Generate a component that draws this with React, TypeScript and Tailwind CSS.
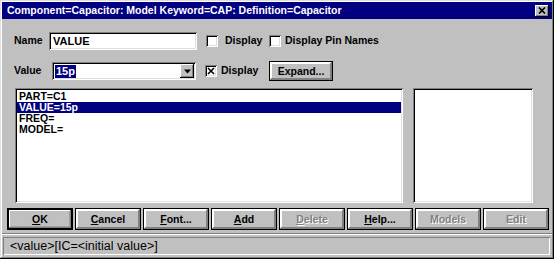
import React from "react";

const FONT = { fontFamily: '"Liberation Sans", Arial, sans-serif' };

function Btn({
  children,
  def,
  disabled,
  w = "w-[66px]",
  h = "h-[22px]",
}: {
  children: React.ReactNode;
  def?: boolean;
  disabled?: boolean;
  w?: string;
  h?: string;
}) {
  return (
    <div
      className={`${w} ${h} shrink-0 flex items-center justify-center bg-[#c0c0c0] text-[10.5px] font-bold leading-none ${
        def
          ? "border-2 border-black shadow-[inset_-1px_-1px_#808080,inset_1px_1px_#fff,inset_-2px_-2px_#a0a0a0]"
          : "border border-black shadow-[inset_-1px_-1px_#808080,inset_1px_1px_#fff,inset_-2px_-2px_#808080,inset_2px_2px_#fff]"
      } ${disabled ? "text-[#808080] [text-shadow:1px_1px_0_#fff]" : "text-black"}`}
    >
      {children}
    </div>
  );
}

function Check({ checked }: { checked?: boolean }) {
  return (
    <div className="w-[12px] h-[12px] shrink-0 bg-white shadow-[inset_1px_1px_#808080,inset_-1px_-1px_#fff,inset_2px_2px_#000,inset_-2px_-2px_#dfdfdf] flex items-center justify-center">
      {checked && (
        <svg width="8" height="8" viewBox="0 0 8 8">
          <path d="M1 1 L7 7 M7 1 L1 7" stroke="#000" strokeWidth="1.6" />
        </svg>
      )}
    </div>
  );
}

const sunken =
  "bg-white shadow-[inset_1px_1px_#808080,inset_-1px_-1px_#fff,inset_2px_2px_#000,inset_-2px_-2px_#dfdfdf]";

export default function App() {
  return (
    <div
      style={FONT}
      className="w-[554px] h-[259px] bg-[#c0c0c0] p-[2px] flex flex-col shadow-[inset_-1px_-1px_#000,inset_1px_1px_#dfdfdf,inset_-2px_-2px_#808080,inset_2px_2px_#fff] overflow-hidden"
    >
      {/* Title bar */}
      <div className="h-[17px] shrink-0 bg-[#000080] flex items-center justify-between pl-[5px] pr-[3px]">
        <span className="text-white font-bold text-[10.5px] leading-none">
          Component=Capacitor: Model Keyword=CAP: Definition=Capacitor
        </span>
        <div className="w-[14px] h-[12px] bg-[#c0c0c0] shadow-[inset_-1px_-1px_#000,inset_1px_1px_#fff,inset_-2px_-2px_#808080] flex items-center justify-center">
          <svg width="8" height="7" viewBox="0 0 8 7">
            <path d="M1 0.5 L7 6.5 M7 0.5 L1 6.5" stroke="#000" strokeWidth="1.7" />
          </svg>
        </div>
      </div>

      {/* Row 1 */}
      <div className="mt-[13px] h-[18px] shrink-0 flex items-center text-[10.5px] font-bold text-black">
        <span className="ml-[12px] w-[35px]">Name</span>
        <div className={`w-[148px] h-[18px] ${sunken} flex items-center pl-[4px] font-normal text-[12px]`}>
          <span className="font-bold text-[11px]">VALUE</span>
        </div>
        <div className="ml-[9px]">
          <Check />
        </div>
        <span className="ml-[7px] w-[44px]">Display</span>
        <Check />
        <span className="ml-[4px]">Display Pin Names</span>
      </div>

      {/* Row 2 */}
      <div className="mt-[11px] h-[20px] shrink-0 flex items-center text-[10.5px] font-bold text-black">
        <span className="ml-[12px] w-[38px]">Value</span>
        <div className={`w-[144px] h-[18px] ${sunken} flex items-center p-[2px]`}>
          <div className="flex-1 h-full flex items-center pl-[1px]">
            <span className="bg-[#000080] text-white px-[1px] leading-[13px] text-[11px]">15p</span>
          </div>
          <div className="w-[14px] h-full bg-[#c0c0c0] shadow-[inset_-1px_-1px_#000,inset_1px_1px_#fff,inset_-2px_-2px_#808080] flex items-center justify-center">
            <svg width="7" height="5" viewBox="0 0 7 5">
              <path d="M0 0.5 H7 L3.5 4.5 Z" fill="#000" />
            </svg>
          </div>
        </div>
        <div className="ml-[9px]">
          <Check checked />
        </div>
        <span className="ml-[4px] w-[48px]">Display</span>
        <Btn w="w-[64px]" h="h-[20px]">
          Expand...
        </Btn>
      </div>

      {/* Lists */}
      <div className="mt-[7px] h-[115px] shrink-0 flex">
        <div className={`ml-[13px] w-[388px] h-full ${sunken} p-[2px] pt-[3px] flex flex-col text-[10.5px] font-bold text-black leading-[11px]`}>
          <div className="h-[11px] pl-[2px]">PART=C1</div>
          <div className="h-[11px] pl-[2px] bg-[#000080] text-white">VALUE=15p</div>
          <div className="h-[11px] pl-[2px]">FREQ=</div>
          <div className="h-[11px] pl-[2px]">MODEL=</div>
        </div>
        <div className={`ml-[10px] w-[120px] h-full ${sunken}`} />
      </div>

      {/* Buttons */}
      <div className="mt-[5px] ml-[5px] flex gap-[2px] shrink-0">
        <Btn def>
          <span>
            <u>O</u>K
          </span>
        </Btn>
        <Btn>
          <span>
            <u>C</u>ancel
          </span>
        </Btn>
        <Btn>
          <span>
            <u>F</u>ont...
          </span>
        </Btn>
        <Btn>
          <span>
            <u>A</u>dd
          </span>
        </Btn>
        <Btn disabled>
          <span>
            <u>D</u>elete
          </span>
        </Btn>
        <Btn>
          <span>
            <u>H</u>elp...
          </span>
        </Btn>
        <Btn disabled>Models</Btn>
        <Btn disabled>Edit</Btn>
      </div>

      {/* Separator */}
      <div className="mt-[3px] h-[2px] shrink-0 border-t border-[#808080] border-b border-b-white" />

      {/* Status bar */}
      <div className="mt-[2px] ml-[1px] w-[547px] h-[18px] shrink-0 flex items-center pl-[7px] text-[12.5px] text-black shadow-[inset_1px_1px_#808080,inset_-1px_-1px_#fff]">
        &lt;value&gt;[IC=&lt;initial value&gt;]
      </div>
    </div>
  );
}
